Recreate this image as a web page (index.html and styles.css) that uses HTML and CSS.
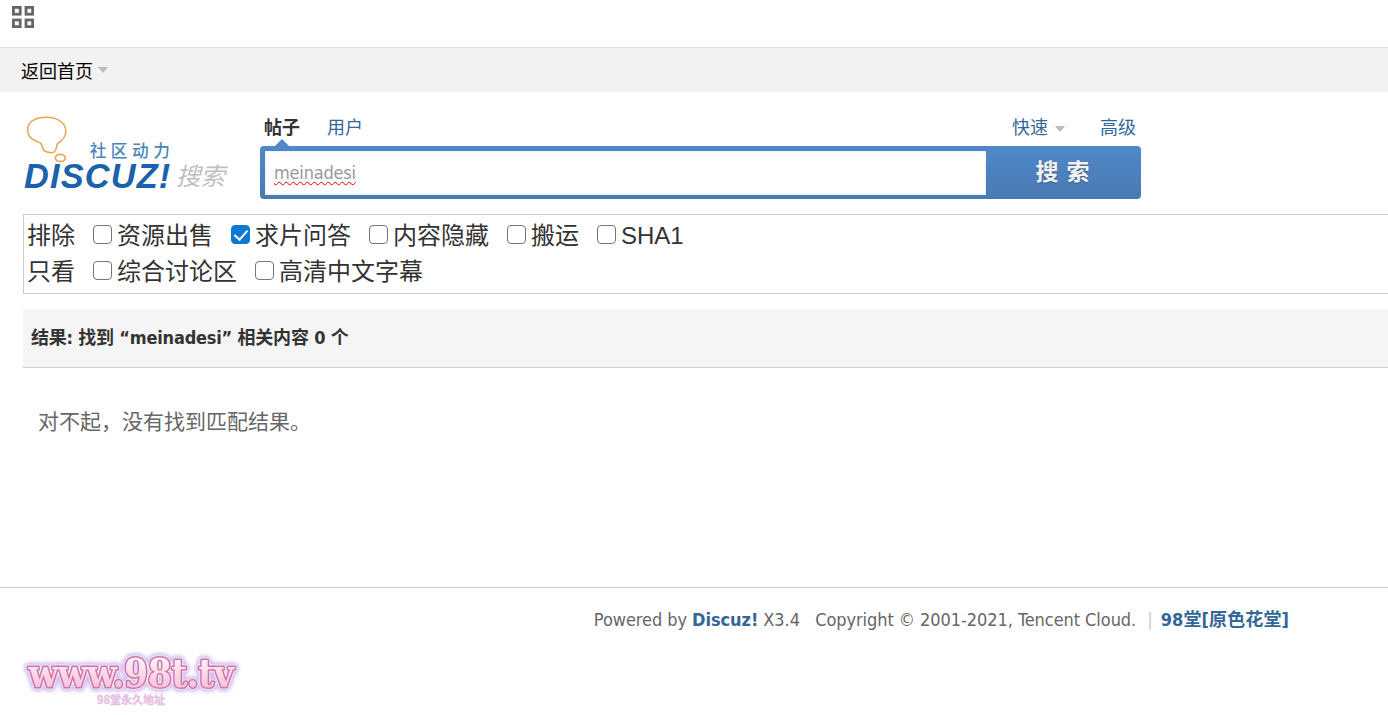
FILE: index.html
```html
<!DOCTYPE html>
<html lang="zh">
<head>
<meta charset="utf-8">
<title>搜索</title>
<link rel="stylesheet" href="styles.css">
</head>
<body>
<div class="topbar">
  <svg class="grid-icon" width="22" height="22" viewBox="0 0 22 22"><g fill="none" stroke="#666" stroke-width="2.8"><rect x="1.4" y="1.4" width="6.8" height="6.8"/><rect x="14" y="1.4" width="6.6" height="6.8"/><rect x="1.4" y="14" width="6.8" height="6.6"/><rect x="14" y="14" width="6.6" height="6.6"/></g></svg>
</div>
<nav class="nav"><a class="home">返回首页</a><span class="caret"></span></nav>
<header class="head">
  <svg class="logo" width="210" height="82" viewBox="0 0 210 82">
    <path d="M24 2.5C35 2.5 43.7 8 43.7 17C43.7 23 39 27 35 29.5C34 33 34 36 32 38C27 39.5 21 38 20 34C19 31 19.5 30 18 29C11 26 4.7 24 4.7 15C4.7 7 13 2.5 24 2.5Z" fill="#fff" stroke="#e9a75a" stroke-width="1.6"/>
    <ellipse cx="38" cy="44" rx="5" ry="3.6" fill="#fff" stroke="#e9a75a" stroke-width="1.8"/>
    <text class="logo-cn" x="68" y="43">社区动力</text>
    <text class="logo-main" x="1" y="75">DISCUZ!</text>
    <text class="logo-search" x="156" y="72">搜索</text>
  </svg>
  <div class="search">
    <div class="tabs">
      <div class="tabs-left"><a class="tab active">帖子</a><a class="tab">用户</a></div>
      <div class="tabs-right"><a class="tab">快速<span class="caret"></span></a><a class="tab">高级</a></div>
    </div>
    <form class="sbox">
      <span class="notch"></span>
      <div class="sinput"><span class="sword">meinadesi</span></div>
      <div class="sbtn">搜 索</div>
    </form>
  </div>
</header>
<section class="filters">
  <div class="frow"><span class="flabel">排除</span>
    <label class="fitem"><input type="checkbox">资源出售</label>
    <label class="fitem"><input type="checkbox" checked>求片问答</label>
    <label class="fitem"><input type="checkbox">内容隐藏</label>
    <label class="fitem"><input type="checkbox">搬运</label>
    <label class="fitem"><input type="checkbox">SHA1</label>
  </div>
  <div class="frow"><span class="flabel">只看</span>
    <label class="fitem"><input type="checkbox">综合讨论区</label>
    <label class="fitem"><input type="checkbox">高清中文字幕</label>
  </div>
</section>
<h2 class="result">结果: 找到 “meinadesi” 相关内容 0 个</h2>
<p class="empty">对不起，没有找到匹配结果。</p>
<footer class="foot">
  <div class="copy">Powered by <b class="blue">Discuz!</b> X3.4 &nbsp; Copyright © 2001-2021, Tencent Cloud. <span class="pipe">|</span> <b class="blue site">98堂[原色花堂]</b></div>
  <svg class="badge" width="240" height="60" viewBox="0 0 240 60">
    <defs><linearGradient id="pinkfill" x1="0" y1="0" x2="0" y2="1"><stop offset="0" stop-color="#fff"/><stop offset="1" stop-color="#f7b3d3"/></linearGradient></defs>
    <text class="b-top" x="120" y="37" fill="url(#pinkfill)">www.98t.tv</text>
    <text class="b-sub" x="120" y="54">98堂永久地址</text>
  </svg>
</footer>
</body>
</html>
```
FILE: styles.css
```css
* { box-sizing: border-box; }
html, body { margin: 0; padding: 0; }
body { width: 1388px; height: 715px; overflow: hidden; background: #fff; color: #444; font-family: "Liberation Sans", "Noto Sans CJK SC", sans-serif; }
.topbar { height: 48px; border-bottom: 1px solid #e0e0e0; padding: 6px 0 0 12px; }
.grid-icon { display: block; }
.nav { height: 44px; background: #f2f2f2; padding-left: 21px; display: flex; align-items: center; font-size: 18px; color: #000; }
.caret { display: inline-block; width: 0; height: 0; border: 5.5px solid transparent; border-top: 6px solid #bbb; border-bottom: 0; margin-left: 5px; vertical-align: middle; }
.head { display: flex; padding: 21px 0 0 23px; height: 122px; }
.logo { display: block; margin-top: 1px; flex: none; width: 206px; overflow: visible; }
.logo-cn { font: 500 17px "Noto Sans CJK SC", sans-serif; fill: #4a86b8; letter-spacing: 4.6px; }
.logo-main { font: italic 700 35px "Liberation Sans", sans-serif; fill: #1a62ab; letter-spacing: 1.2px; }
.logo-search { font: italic 25px "Noto Sans CJK SC", sans-serif; fill: #c0c0c0; }
.search { width: 881px; margin-left: 31px; }
.tabs { display: flex; justify-content: space-between; height: 33px; font-size: 18px; padding: 2px 5px 0 4px; }
.tabs-left, .tabs-right { display: flex; }
.tab { color: #336699; line-height: 27px; }
.tabs-left .tab + .tab { margin-left: 27px; }
.tabs-right .tab + .tab { margin-left: 35px; }
.tab .caret { margin-left: 7px; }
.tab.active { color: #333; font-weight: 700; }
.sbox { position: relative; display: flex; height: 53px; background: linear-gradient(#4f88c9, #4a79b3); border-radius: 4px; padding: 5px 0 4px 5px; }
.notch { position: absolute; left: 15px; top: -7px; border: 7px solid transparent; border-top: 0; border-bottom: 7px solid #5087c6; }
.sinput { width: 721px; background: #fff; color: #999; font: 18px/44px "DejaVu Sans", sans-serif; font-stretch: condensed; letter-spacing: -.2px; padding-left: 9px; box-shadow: inset 0 0 3px #cfe0f2; }
.sword { text-decoration: underline wavy #e00 1px; text-underline-offset: 2px; }
.sbtn { flex: 1; color: #f2f2f2; text-align: center; font: 700 23px/38px "Noto Sans CJK SC", sans-serif; text-shadow: 0 1px 1px #35577f; word-spacing: 3px; padding-right: 2px; }
.filters { margin-left: 23px; height: 80px; border: 1px solid #ccc; border-right: 0; padding: 3px 0 0 3px; font-size: 24px; color: #333; }
.frow { display: flex; height: 36px; line-height: 36px; }
.flabel { width: 66px; }
.fitem { display: flex; align-items: center; margin-right: 18px; }
.fitem input { appearance: none; position: relative; width: 19px; height: 19px; margin: 0 5px 4px 0; border: 1.5px solid #767676; border-radius: 4px; background: #fff; }
.fitem input:checked { background: #0f78d4; border-color: #0f78d4; }
.fitem input:checked::after { content: ""; position: absolute; left: 5px; top: 1px; width: 6px; height: 11px; border: solid #fff; border-width: 0 2.5px 2.5px 0; transform: rotate(42deg); }
.result { margin: 15px 0 0 23px; height: 59px; background: #f5f5f5; border-bottom: 1px solid #ccc; padding-left: 8px; font: 700 18px/58px "DejaVu Sans", "Noto Sans CJK SC", sans-serif; font-stretch: condensed; letter-spacing: -.2px; color: #333; }
.empty { margin: 0 0 0 38px; height: 219px; padding-top: 40px; font-size: 21px; line-height: 28px; color: #666; }
.foot { border-top: 1px solid #ccc; position: relative; }
.copy { text-align: right; padding: 20px 99px 0 0; font: 18px/24px "DejaVu Sans", "Noto Sans CJK SC", sans-serif; font-stretch: condensed; letter-spacing: -.06px; color: #666; }
.blue { color: #336699; }
.site { letter-spacing: .1px; }
.pipe { color: #ccc; margin: 0 3px 0 6px; }
.badge { position: absolute; left: 11px; top: 62px; overflow: visible; }
.b-top { font: 700 38.5px "DejaVu Serif", serif; font-stretch: condensed; text-anchor: middle; letter-spacing: -.5px; stroke: #cf72a8; stroke-width: 3px; paint-order: stroke; stroke-linejoin: round; filter: drop-shadow(0 0 1px #fff) drop-shadow(0 0 1px #fff) drop-shadow(0 0 2px #b9a0e8) drop-shadow(0 0 1px #c9b4ea); }
.b-sub { font: 700 11px "Noto Sans CJK SC", sans-serif; text-anchor: middle; fill: #f4b9d6; stroke: #d8c8ee; stroke-width: .4px; }
```
